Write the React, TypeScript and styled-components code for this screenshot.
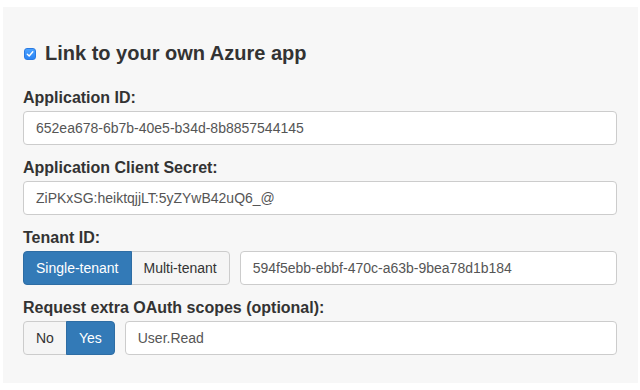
import React, { useState } from 'react';
import styled, { createGlobalStyle, css } from 'styled-components';

const GlobalStyle = createGlobalStyle`
  html, body {
    margin: 0;
    padding: 0;
    background: #fff;
  }
  body {
    font-family: "Liberation Sans", Arial, Helvetica, sans-serif;
    font-size: 14px;
    color: #333;
  }
  * {
    box-sizing: border-box;
  }
`;

const Page = styled.div`
  padding: 7px 2px 6px 3px;
`;

const Panel = styled.section`
  background-color: #f7f7f7;
  padding: 34px 21px 28px 20px;
`;

const Heading = styled.label`
  display: flex;
  align-items: center;
  gap: 9px;
  margin: 0 0 24px 1px;
  font-size: 20px;
  line-height: 24px;
  font-weight: bold;
  color: #333;
  cursor: pointer;
`;

const CheckBox = styled.span<{ checked: boolean }>`
  display: inline-flex;
  align-items: center;
  justify-content: center;
  width: 12px;
  height: 12px;
  margin-top: 1px;
  border-radius: 3px;
  ${(p) =>
    p.checked
      ? css`
          background: linear-gradient(#4ba2ff, #2a84f5);
          border: 1px solid #2a7ae2;
        `
      : css`
          background: #fff;
          border: 1px solid #aaa;
        `}
`;

const FormGroup = styled.div`
  margin-bottom: 14px;

  &:last-child {
    margin-bottom: 0;
  }
`;

const Label = styled.label`
  display: block;
  margin-bottom: 4px;
  font-size: 16px;
  line-height: 18px;
  font-weight: bold;
  color: #333;
`;

const TextInput = styled.input`
  display: block;
  flex: 1;
  width: 100%;
  min-width: 0;
  height: 34px;
  padding: 6px 12px;
  font-family: inherit;
  font-size: 14px;
  line-height: 20px;
  color: #555;
  background-color: #fff;
  border: 1px solid #ccc;
  border-radius: 4px;
  outline: none;
`;

const Row = styled.div`
  display: flex;
  align-items: center;
  gap: 10px;
`;

const ButtonGroup = styled.div`
  display: flex;
  flex: none;
`;

const ToggleButton = styled.button<{ active: boolean }>`
  height: 34px;
  padding: 6px 12px;
  font-family: inherit;
  font-size: 14px;
  line-height: 20px;
  cursor: pointer;
  border: 1px solid #ccc;
  margin-left: -1px;
  border-radius: 0;

  &:first-child {
    margin-left: 0;
    border-radius: 4px 0 0 4px;
  }
  &:last-child {
    border-radius: 0 4px 4px 0;
  }

  ${(p) =>
    p.active
      ? css`
          color: #fff;
          background-color: #337ab7;
          border-color: #2e6da4;
          position: relative;
        `
      : css`
          color: #333;
          background-color: #f5f5f5;
        `}
`;

const Check = () => (
  <svg width="8" height="8" viewBox="0 0 8 8" fill="none">
    <path d="M1.3 4.2 L3.2 6 L6.8 1.8" stroke="#fff" strokeWidth="1.4" strokeLinecap="round" strokeLinejoin="round" />
  </svg>
);

export default function App() {
  const [linked, setLinked] = useState(true);
  const [tenant, setTenant] = useState<'single' | 'multi'>('single');
  const [extra, setExtra] = useState(true);

  return (
    <Page>
      <GlobalStyle />
      <Panel>
        <Heading onClick={() => setLinked(!linked)}>
          <CheckBox checked={linked}>{linked && <Check />}</CheckBox>
          <span>Link to your own Azure app</span>
        </Heading>

        <FormGroup>
          <Label htmlFor="app-id">Application ID:</Label>
          <TextInput id="app-id" defaultValue="652ea678-6b7b-40e5-b34d-8b8857544145" />
        </FormGroup>

        <FormGroup>
          <Label htmlFor="app-secret">Application Client Secret:</Label>
          <TextInput id="app-secret" defaultValue="ZiPKxSG:heiktqjjLT:5yZYwB42uQ6_@" />
        </FormGroup>

        <FormGroup>
          <Label htmlFor="tenant-id">Tenant ID:</Label>
          <Row>
            <ButtonGroup>
              <ToggleButton active={tenant === 'single'} onClick={() => setTenant('single')}>
                Single-tenant
              </ToggleButton>
              <ToggleButton active={tenant === 'multi'} onClick={() => setTenant('multi')}>
                Multi-tenant
              </ToggleButton>
            </ButtonGroup>
            <TextInput id="tenant-id" defaultValue="594f5ebb-ebbf-470c-a63b-9bea78d1b184" />
          </Row>
        </FormGroup>

        <FormGroup>
          <Label htmlFor="scopes">Request extra OAuth scopes (optional):</Label>
          <Row>
            <ButtonGroup>
              <ToggleButton active={!extra} onClick={() => setExtra(false)}>
                No
              </ToggleButton>
              <ToggleButton active={extra} onClick={() => setExtra(true)}>
                Yes
              </ToggleButton>
            </ButtonGroup>
            <TextInput id="scopes" defaultValue="User.Read" />
          </Row>
        </FormGroup>
      </Panel>
    </Page>
  );
}
